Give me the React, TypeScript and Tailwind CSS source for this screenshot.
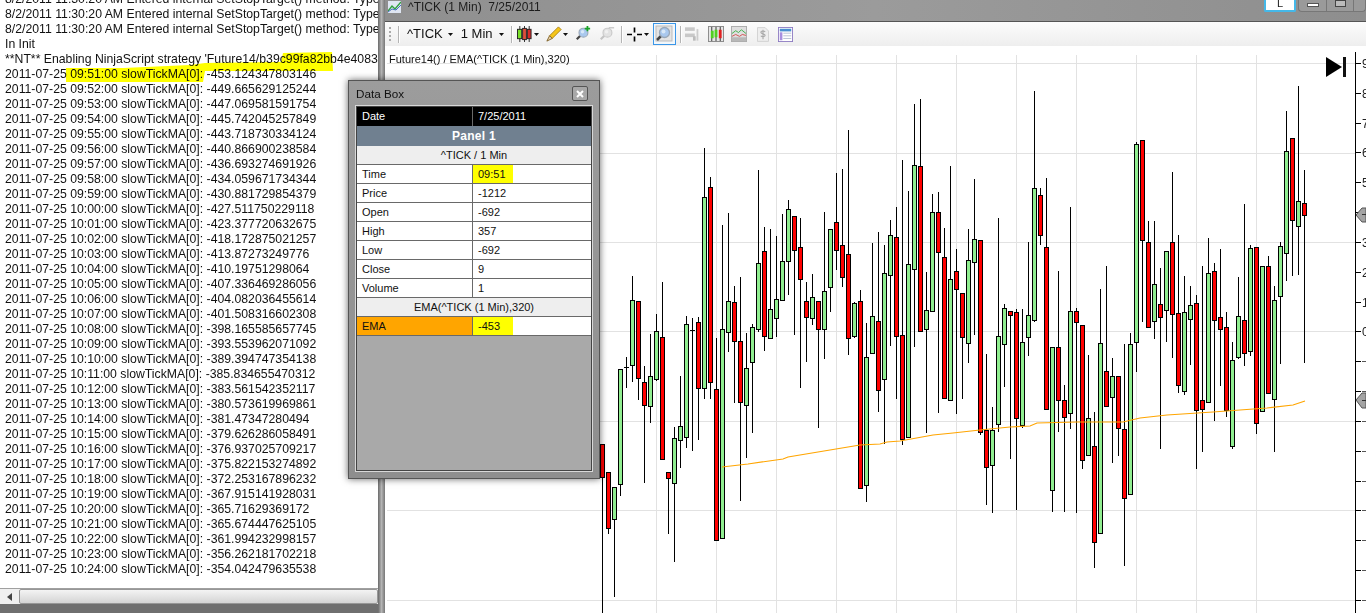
import React from "react";

const FONT = "font-['Liberation_Sans',Arial,sans-serif]";

const logRows: string[] = [
  "09:51:00 slowTickMA[0]: -453.124347803146",
  "09:52:00 slowTickMA[0]: -449.665629125244",
  "09:53:00 slowTickMA[0]: -447.069581591754",
  "09:54:00 slowTickMA[0]: -445.742045257849",
  "09:55:00 slowTickMA[0]: -443.718730334124",
  "09:56:00 slowTickMA[0]: -440.866900238584",
  "09:57:00 slowTickMA[0]: -436.693274691926",
  "09:58:00 slowTickMA[0]: -434.059671734344",
  "09:59:00 slowTickMA[0]: -430.881729854379",
  "10:00:00 slowTickMA[0]: -427.511750229118",
  "10:01:00 slowTickMA[0]: -423.377720632675",
  "10:02:00 slowTickMA[0]: -418.172875021257",
  "10:03:00 slowTickMA[0]: -413.87273249776",
  "10:04:00 slowTickMA[0]: -410.19751298064",
  "10:05:00 slowTickMA[0]: -407.336469286056",
  "10:06:00 slowTickMA[0]: -404.082036455614",
  "10:07:00 slowTickMA[0]: -401.508316602308",
  "10:08:00 slowTickMA[0]: -398.165585657745",
  "10:09:00 slowTickMA[0]: -393.553962071092",
  "10:10:00 slowTickMA[0]: -389.394747354138",
  "10:11:00 slowTickMA[0]: -385.834655470312",
  "10:12:00 slowTickMA[0]: -383.561542352117",
  "10:13:00 slowTickMA[0]: -380.573619969861",
  "10:14:00 slowTickMA[0]: -381.47347280494",
  "10:15:00 slowTickMA[0]: -379.626286058491",
  "10:16:00 slowTickMA[0]: -376.937025709217",
  "10:17:00 slowTickMA[0]: -375.822153274892",
  "10:18:00 slowTickMA[0]: -372.253167896232",
  "10:19:00 slowTickMA[0]: -367.915141928031",
  "10:20:00 slowTickMA[0]: -365.71629369172",
  "10:21:00 slowTickMA[0]: -365.674447625105",
  "10:22:00 slowTickMA[0]: -361.994232998157",
  "10:23:00 slowTickMA[0]: -356.262181702218",
  "10:24:00 slowTickMA[0]: -354.042479635538",
];

// high, body top, body bottom, low, up?  (pixel rows of the picture), one bar every 6px from x=602
const bars: [number, number, number, number, number][] = [
  [444,444,477,613,0],[472,472,528,534,0],[487,487,519,597,1],[369,369,484,496,1],[357,366,368,388,2],
  [276,300,365,382,1],[301,301,378,400,0],[366,382,405,483,0],[334,376,406,423,1],[314,331,379,381,1],
  [282,337,459,459,0],[472,472,478,534,0],[427,438,483,562,1],[376,426,440,468,1],[316,324,437,448,1],
  [318,329,330,451,2],[317,322,388,440,0],[148,197,388,399,1],[177,187,382,399,0],[338,389,540,540,0],
  [225,329,538,538,1],[213,301,332,352,1],[286,302,341,403,0],[277,341,402,501,0],[333,368,405,458,1],
  [324,327,362,433,1],[170,263,329,332,1],[227,251,336,351,0],[229,309,338,339,1],[236,299,318,337,1],
  [214,261,300,300,1],[200,209,261,295,1],[216,216,250,335,0],[218,247,279,388,0],[282,301,317,362,0],
  [274,297,318,325,1],[301,301,329,428,0],[212,291,329,359,1],[229,229,287,312,1],[173,222,250,270,0],
  [169,245,277,287,0],[130,254,338,355,0],[302,303,336,338,1],[290,301,488,488,0],[323,357,485,502,1],
  [243,316,353,353,1],[232,321,390,412,0],[245,273,379,444,1],[220,235,275,346,1],[207,237,336,399,0],
  [160,335,439,445,0],[191,264,437,437,1],[104,165,269,347,1],[99,166,331,331,0],[272,310,329,433,1],
  [194,212,311,311,1],[192,212,252,413,0],[228,257,398,398,0],[166,279,400,400,1],[249,271,289,414,0],
  [293,293,337,399,0],[229,260,343,363,1],[179,239,262,335,1],[240,240,432,435,0],[354,430,467,505,0],
  [407,430,465,513,1],[218,336,424,432,1],[304,308,344,387,1],[311,311,315,459,0],[309,312,418,510,0],
  [309,342,425,428,1],[242,315,337,356,1],[91,188,320,322,1],[188,195,235,245,0],[178,247,409,409,0],
  [347,347,490,512,1],[271,347,400,432,0],[385,400,417,512,0],[207,311,413,429,1],[308,311,322,513,0],
  [325,325,460,469,0],[355,418,455,455,1],[412,446,542,568,0],[289,343,533,533,1],[266,371,406,407,0],
  [358,376,397,463,1],[376,376,428,456,0],[344,429,498,566,0],[333,344,494,494,1],[142,144,342,372,1],
  [140,140,240,322,0],[221,242,327,327,0],[221,284,321,339,1],[268,304,317,449,0],[251,251,310,342,1],
  [172,242,314,358,0],[235,313,385,393,0],[276,312,391,395,1],[286,305,319,365,1],[295,303,410,469,0],
  [266,400,409,452,0],[238,273,402,402,1],[263,271,320,421,0],[249,317,329,386,0],[312,327,410,417,0],
  [342,360,446,449,1],[277,316,357,359,1],[204,320,353,366,0],[245,248,351,356,1],[247,247,423,434,0],
  [266,266,411,411,1],[256,266,393,393,0],[286,300,399,452,1],[242,246,296,364,1],[111,151,253,281,1],
  [138,138,220,276,0],[86,201,226,275,1],[170,203,215,363,0],
];

const emaPoints =
  "722,467 748,464 783,459 788,457 860,445 880,444 887,442 900,441 933,435 953,433 980,430 1010,427 1030,426 1037,423 1077,422 1093,422 1123,422 1140,418 1167,415 1213,412 1267,408 1293,405 1305,401";

const Caret = () => (
  <svg width="5" height="3" className="shrink-0">
    <polygon points="0,0 5,0 2.5,3" fill="#111" />
  </svg>
);

const Sep = () => <div className="w-px h-[17px] bg-[#b4b4b4] border-r border-white box-content shrink-0" />;

const Lens = ({ gray }: { gray?: boolean }) => (
  <>
    <line x1="2" y1="15" x2="6" y2="11" stroke={gray ? "#c4c4c4" : "#444"} strokeWidth="2.5" />
    <circle cx="9.5" cy="7.5" r="5" fill={gray ? "#e2e2e2" : "#a9c8ee"} stroke={gray ? "#cacaca" : "#9aa8b8"} strokeWidth="1.3" />
    <circle cx="8.5" cy="6.5" r="2" fill={gray ? "#f0f0f0" : "#d8e8f8"} />
  </>
);

const Toolbar = () => (
  <div className="h-[24px] shrink-0 flex items-center bg-gradient-to-b from-[#fcfcfc] to-[#eeeeee] text-[13px] text-[#111]">
    <div className="ml-[4px] w-[2px] h-[14px] border-l-2 border-dotted border-[#aaa]" />
    <div className="ml-[7px]"><Sep /></div>
    <span className="ml-[7px]">^TICK</span>
    <div className="ml-[5px]"><Caret /></div>
    <span className="ml-[8px]">1 Min</span>
    <div className="ml-[6px]"><Caret /></div>
    <div className="ml-[7px]"><Sep /></div>
    <svg width="15" height="16" viewBox="0 0 16 17" className="ml-[4px] shrink-0">
      <g stroke="#222" strokeWidth="1">
        <line x1="3" y1="0" x2="3" y2="17" /><line x1="8" y1="0" x2="8" y2="17" /><line x1="13" y1="0" x2="13" y2="17" />
        <rect x="0.5" y="3.5" width="4.5" height="10" fill="#7ae02a" />
        <rect x="6" y="2.5" width="4" height="12" fill="#e0503a" />
        <rect x="11" y="3.5" width="4" height="10" fill="#d82a2a" />
      </g>
    </svg>
    <div className="ml-[2px]"><Caret /></div>
    <svg width="16" height="16" viewBox="0 0 18 18" className="ml-[7px] shrink-0">
      <polygon points="4,11 14,1 17,4 7,14" fill="#f5c518" stroke="#a77d10" />
      <polygon points="4,11 7,14 1,17" fill="#eed7b0" stroke="#7a5a20" />
    </svg>
    <div className="ml-[1px]"><Caret /></div>
    <svg width="16" height="16" viewBox="0 0 18 18" className="ml-[7px] shrink-0">
      <Lens />
      <path d="M14 0v6M11 3h6" stroke="#1aa329" strokeWidth="2" />
    </svg>
    <svg width="16" height="16" viewBox="0 0 18 18" className="ml-[8px] shrink-0">
      <Lens gray />
      <path d="M11 2h6" stroke="#c4c4c4" strokeWidth="1.5" />
    </svg>
    <div className="ml-[6px]"><Sep /></div>
    <svg width="15" height="15" viewBox="0 0 18 17" className="ml-[4px] shrink-0">
      <path d="M9 0v6M9 11v6M0 8.5h6M12 8.5h6" stroke="#000" strokeWidth="2" />
    </svg>
    <div className="ml-[2px]"><Caret /></div>
    <div className="ml-[4px] w-[23px] h-[22px] border border-[#3a96e8] bg-[#f2f7fb] flex items-center justify-center shrink-0">
      <svg width="18" height="18"><rect x="1" y="1" width="16" height="15" fill="#e4e4e4" stroke="#bbb" /><Lens /></svg>
    </div>
    <div className="ml-[4px]"><Sep /></div>
    <svg width="16" height="16" viewBox="0 0 18 17" className="ml-[3px] shrink-0">
      <rect x="0" y="1" width="11" height="4" fill="#c8c8c8" /><rect x="0" y="8" width="11" height="4" fill="#c8c8c8" />
      <rect x="13" y="3" width="2" height="13" fill="#ccc" /><rect x="9" y="11" width="3" height="5" fill="#bbb" />
    </svg>
    <svg width="16" height="16" viewBox="0 0 17 17" className="ml-[7px] shrink-0">
      <rect x="0.5" y="0.5" width="16" height="16" fill="#e6e6e6" stroke="#888" />
      <g stroke="#333"><line x1="4" y1="1" x2="4" y2="16" /><line x1="8.5" y1="1" x2="8.5" y2="16" /><line x1="13" y1="1" x2="13" y2="16" /></g>
      <rect x="3" y="5" width="3" height="8" fill="#4fd01f" /><rect x="7" y="4" width="3" height="8" fill="#4fd01f" /><rect x="11.5" y="4" width="3" height="9" fill="#e02020" />
    </svg>
    <svg width="16" height="16" viewBox="0 0 17 17" className="ml-[7px] shrink-0">
      <rect x="0.5" y="0.5" width="16" height="16" fill="#dfdfdf" stroke="#aaa" />
      <path d="M1 8l4-3 3 2 3-3 5 4" fill="none" stroke="#3fb04a" /><path d="M1 11l4-2 4 2 3-2 4 1" fill="none" stroke="#d05050" />
      <rect x="1" y="12" width="15" height="4" fill="#b8b8b8" />
    </svg>
    <svg width="12" height="15" viewBox="0 0 14 17" className="ml-[10px] shrink-0">
      <path d="M0.5 0.5h9l4 4v12h-13z" fill="#eee" stroke="#ccc" />
      <path d="M9.5 5.5c-1-1.5-5-1.5-5 .5s5 1.5 5 3.5-4 2-5 .5M7 3v11" fill="none" stroke="#aaa" strokeWidth="1.3" />
    </svg>
    <svg width="15" height="15" viewBox="0 0 17 17" className="ml-[9px] shrink-0">
      <rect x="0.5" y="0.5" width="16" height="16" fill="#fff" stroke="#8a78c0" />
      <rect x="2" y="2" width="13" height="3" fill="#4a8fd0" /><rect x="2" y="6" width="3" height="9" fill="#a88fe0" />
      <path d="M6 7h9M6 10h9M6 13h9" stroke="#b0b8d0" />
    </svg>
  </div>
);

const Chart = () => {
  const hGrid = [63, 153, 242, 331, 421, 510, 600];
  const vGrid = [656, 716, 776, 836, 896, 956, 1016, 1076, 1136, 1196, 1256];
  const ticks = Array.from({ length: 19 }, (_, i) => Math.round(63 + i * 29.83));
  const labels = ["9", "8", "7", "6", "5", "", "3", "2", "1", "0"];
  return (
    <svg width="981" height="567" viewBox="385 46 981 567" className="block" shapeRendering="crispEdges">
      <rect x="385" y="46" width="981" height="567" fill="#fff" />
      {hGrid.map((y) => (
        <line key={y} x1="387" x2="1355" y1={y + 0.5} y2={y + 0.5} stroke="#e2e2e2" />
      ))}
      {vGrid.map((x) => (
        <line key={x} x1={x + 0.5} x2={x + 0.5} y1="55" y2="613" stroke="#e2e2e2" />
      ))}
      {bars.map(([hi, top, bot, lo, kind], i) => {
        const x = 602 + i * 6;
        return (
          <g key={i}>
            <line x1={x + 0.5} x2={x + 0.5} y1={hi} y2={lo} stroke="#000" />
            {kind === 2 ? (
              <line x1={x - 2} x2={x + 3} y1={top + 1.5} y2={top + 1.5} stroke="#000" />
            ) : (
              <rect
                x={x - 1.5}
                y={top + 0.5}
                width="4"
                height={bot - top}
                fill={kind === 1 ? "#90ee90" : "#ff0000"}
                stroke="#000"
              />
            )}
          </g>
        );
      })}
      <polyline points={emaPoints} fill="none" stroke="#ffa500" strokeWidth="1.2" shapeRendering="auto" />
      <line x1="1355.5" x2="1355.5" y1="52" y2="613" stroke="#000" />
      {ticks.map((y) => (
        <line key={y} x1="1356" x2="1361" y1={y + 0.5} y2={y + 0.5} stroke="#000" />
      ))}
      {labels.map((t, i) => (
        <text key={i} x="1362" y={ticks[i] + 4.5} fontSize="12" fontFamily="Liberation Sans" fill="#222" shapeRendering="auto">
          {t}
        </text>
      ))}
      {ticks.slice(10).map((y) => (
        <rect key={y} x="1362" y={y} width="4" height="1" fill="#555" />
      ))}
      <polygon points="1356,215 1362,208 1366,208 1366,222 1362,222" fill="#a4a4a4" stroke="#555" shapeRendering="auto" />
      <polygon points="1356,400 1362,393 1366,393 1366,408 1362,408" fill="#a4a4a4" stroke="#555" shapeRendering="auto" />
      <rect x="1362" y="214" width="4" height="1" fill="#333" />
      <rect x="1362" y="400" width="4" height="1" fill="#333" />
      <polygon points="1326,57 1342,67 1326,77" fill="#000" shapeRendering="auto" />
      <rect x="1343" y="57" width="3" height="20" fill="#111" />
    </svg>
  );
};

const DataRow = ({ label, value, mark, orange }: { label: string; value: string; mark?: boolean; orange?: boolean }) => (
  <div className="grid grid-cols-[116px_1fr] h-[19px] border-b border-[#696969] bg-white leading-[18px]">
    <div className={`pl-[5px] border-r border-[#696969] ${orange ? "bg-[#ffa500]" : ""}`}>{label}</div>
    <div>
      <span className={`inline-block h-[18px] w-[40px] pl-[5px] ${mark ? "bg-[#ffff00]" : ""}`}>{value}</span>
    </div>
  </div>
);

const SubHead = ({ text }: { text: string }) => (
  <div className="h-[19px] border-b border-[#696969] bg-[#eeeeee] text-center leading-[18px]">{text}</div>
);

const DataBox = () => (
  <div className="absolute left-[348px] top-[80px] w-[252px] h-[399px] border border-[#555] bg-gradient-to-b from-[#9c9c9c] to-[#8e8e8e] shadow-[0_0_7px_rgba(0,0,0,0.6)] flex flex-col px-[6px] pb-[7px] text-[11px] text-[#111]">
    <div className="h-[25px] shrink-0 flex items-center justify-between pl-[1px] pr-[5px]">
      <span className="text-[11.7px]">Data Box</span>
      <div className="w-[16px] h-[15px] border border-[#555] rounded-[2px] bg-[#a8a8a8] flex items-center justify-center">
        <svg width="8" height="8"><path d="M1 1l6 6M7 1l-6 6" stroke="#fff" strokeWidth="2" /></svg>
      </div>
    </div>
    <div className="flex-1 border border-[#444] outline outline-1 outline-[#d8d8d8] bg-[#a9a9a9] ml-[1px] mr-[1px]">
      <div className="grid grid-cols-[116px_1fr] h-[19px] bg-black text-white leading-[19px]">
        <div className="pl-[5px] border-r border-[#696969]">Date</div>
        <div className="pl-[5px]">7/25/2011</div>
      </div>
      <div className="h-[20px] bg-[#708090] text-white text-[12px] font-bold text-center leading-[20px] tracking-[0.3px]">Panel 1</div>
      <SubHead text="^TICK / 1 Min" />
      <DataRow label="Time" value="09:51" mark />
      <DataRow label="Price" value="-1212" />
      <DataRow label="Open" value="-692" />
      <DataRow label="High" value="357" />
      <DataRow label="Low" value="-692" />
      <DataRow label="Close" value="9" />
      <DataRow label="Volume" value="1" />
      <SubHead text="EMA(^TICK (1 Min),320)" />
      <DataRow label="EMA" value="-453" mark orange />
    </div>
  </div>
);

const App: React.FC = () => {
  const stop = "8/2/2011 11:30:20 AM Entered internal SetStopTarget() method: Type=Target";
  return (
    <div className={`relative flex w-[1366px] h-[613px] overflow-hidden bg-[#8d8d8d] ${FONT}`}>
      {/* output window */}
      <div className="w-[378px] h-full shrink-0 flex flex-col">
        <div className="relative flex-1 min-h-0 bg-white overflow-hidden text-[12.25px] leading-[15px] text-[#111] whitespace-nowrap">
          <div className="-mt-[8px] pl-[5px]">
            <div>{stop}</div>
            <div>{stop}</div>
            <div>{stop}</div>
            <div>In Init</div>
            <div>**NT** Enabling NinjaScript strategy 'Future14/b39c99fa82bb4e4083</div>
            {logRows.map((row) => (
              <div key={row}>2011-07-25 {row}</div>
            ))}
          </div>
          <svg width="378" height="90" className="absolute left-0 top-0 mix-blend-multiply">
            <polygon points="66,68 123,68 190,65 205,63 281,62 283,53 332,52 333,71 205,71 203,82 66,82" fill="#ffff00" />
          </svg>
        </div>
        <div className="h-[16px] shrink-0 flex bg-[#f0f0f0] border-t border-[#a0a0a0]">
          <div className="w-[19px] flex items-center justify-center">
            <svg width="5" height="8"><polygon points="5,0 5,8 0,4" fill="#444" /></svg>
          </div>
          <div className="flex-1 rounded-[2px] border border-[#979797] bg-gradient-to-b from-[#f4f4f4] to-[#d4d4d4]" />
        </div>
        <div className="h-[9px] shrink-0 bg-[#6f6f6f]" />
      </div>
      <div className="w-[7px] h-full shrink-0 bg-gradient-to-r from-[#6a6a6a] via-[#b4b4b4] to-[#777]" />

      {/* chart window */}
      <div className="flex-1 min-w-0 flex flex-col">
        <div className="h-[22px] shrink-0 relative flex items-start bg-gradient-to-r from-[#8f8f8f] via-[#9b9b9b] to-[#8e8e8e] border-b border-[#555]">
          <svg width="13" height="12" className="ml-[3px] mt-[1px] shrink-0">
            <rect width="13" height="12" fill="#dfe6f2" />
            <path d="M0 10l4-5 3 3 6-7" fill="none" stroke="#2f9f3f" strokeWidth="1.4" />
            <path d="M0 11l4-3 4 1 5-5" fill="none" stroke="#4a6fc0" />
          </svg>
          <span className="ml-[7px] text-[12px] leading-[14px] text-[#1c1c1c] whitespace-pre">^TICK (1 Min)  7/25/2011</span>
          <div className="ml-auto flex items-start h-[12px]">
            <div className="w-[32px] h-[12px] bg-white border-2 border-t-0 border-[#45b8e8] rounded-b-[2px] text-center text-[11px] leading-[7px] text-[#222]">L</div>
            <div className="ml-[2px] w-[68px] h-[12px] flex border border-t-0 border-[#777] rounded-b-[4px] bg-[#9a9a9a]">
              <div className="w-[28px] border-r border-[#777] flex justify-center items-start pt-[3px]">
                <div className="w-[12px] h-[4px] bg-white border border-[#555]" />
              </div>
              <div className="w-[27px] border-r border-[#777] flex justify-center">
                <div className="w-[11px] h-[7px] bg-[#bbb] border border-[#444]" />
              </div>
            </div>
          </div>
        </div>
        <Toolbar />
        <div className="relative flex-1 min-h-0">
          <Chart />
          <div className="absolute left-[4px] top-[6px] text-[11px] leading-[14px] text-[#111]">Future14() / EMA(^TICK (1 Min),320)</div>
        </div>
      </div>

      <DataBox />
    </div>
  );
};

export default App;
